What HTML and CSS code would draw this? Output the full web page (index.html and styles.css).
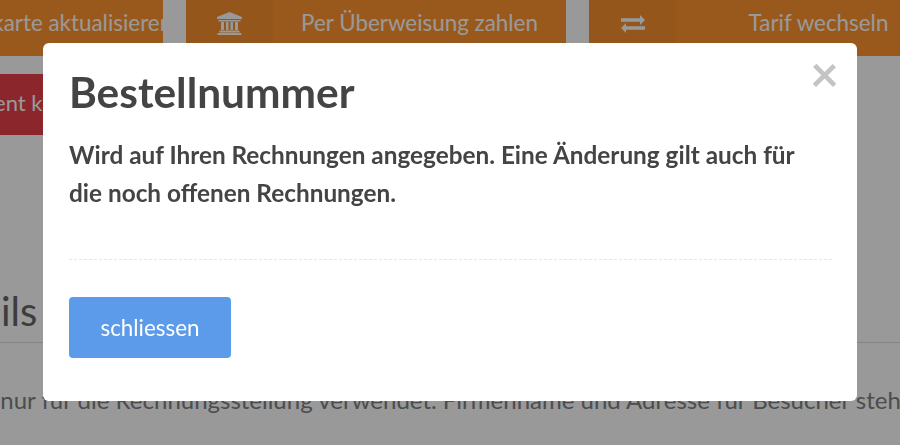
FILE: index.html
```html
<!DOCTYPE html>
<html lang="de">

<head>
  <meta charset="UTF-8" />
  <meta name="viewport" content="width=device-width, initial-scale=1.0" />
  <title>Bestellnummer</title>
  <link rel="stylesheet" href="styles.css">
</head>

<body>
  <div class="page">
    <div class="actions">
      <a class="action">
        <span class="action-icon"></span>
        <span class="action-text action-text-long">Kreditkarte aktualisieren</span>
      </a>
      <a class="action">
        <span class="action-icon">
          <svg width="25" height="23" viewBox="0 0 25 23">
            <path d="M12.5 0 L25 5 V7 H0 V5 Z M1.5 8 H23.5 V9.5 H1.5 Z M2.5 18.5 H22.5 V20.5 H2.5 Z M0.5 21 H24.5 V23 H0.5 Z" fill="currentColor" />
            <path d="M4 10 H7 V18 H4 Z M9 10 H11.5 V18 H9 Z M13.5 10 H16 V18 H13.5 Z M18 10 H21 V18 H18 Z" fill="currentColor" />
          </svg>
        </span>
        <span class="action-text">Per Überweisung zahlen</span>
      </a>
      <a class="action">
        <span class="action-icon">
          <svg width="24" height="18" viewBox="0 0 24 18">
            <path d="M0 3.2 H19 V0 L24 5 L19 10 V6.8 H0 Z M24 11.2 H5 V8 L0 13 L5 18 V14.8 H24 Z" fill="currentColor" />
          </svg>
        </span>
        <span class="action-text action-text-end">Tarif wechseln</span>
      </a>
    </div>

    <a class="btn-danger">Abonnement kündigen</a>

    <h2 class="section-title">Rechnungsdetails</h2>
    <p class="section-text">Diese Angaben werden nur für die Rechnungsstellung verwendet. Firmenname und Adresse für Besucher stehen</p>
  </div>

  <div class="overlay">
    <div class="modal">
      <span class="modal-close">&times;</span>
      <h1>Bestellnummer</h1>
      <p>Wird auf Ihren Rechnungen angegeben. Eine Änderung gilt auch für die noch offenen Rechnungen.</p>
      <div class="modal-sep"></div>
      <button class="btn-close">schliessen</button>
    </div>
  </div>
</body>

</html>
```

FILE: styles.css
```css
* {
  box-sizing: border-box;
}

html,
body {
  height: 100%;
}

body {
  margin: 0;
  overflow: hidden;
  background: #fff;
  font-family: "Lato", "Open Sans", sans-serif;
  color: #444;
}

.page {
  width: 900px;
  height: 445px;
  overflow: hidden;
}

/* Action buttons, cut off by the window on both sides */
.actions {
  display: flex;
  gap: 23px;
  margin: -5px 0 0 -217px;
  width: 1300px;
}

.action {
  flex: none;
  display: flex;
  width: 380px;
  height: 61px;
  background: #ff9530;
  color: #fff;
  font-size: 22.4px;
  overflow: hidden;
}

.action-icon {
  flex: none;
  display: flex;
  align-items: center;
  justify-content: center;
  width: 87px;
  padding-bottom: 4px;
  background: rgba(0, 0, 0, 0.03);
}

.action-text {
  flex: 1;
  line-height: 55px;
  text-align: center;
  white-space: nowrap;
}

.action-text-long {
  padding-left: 62px;
}

.action-text-end {
  padding-right: 8px;
}

.btn-danger {
  display: block;
  width: 300px;
  height: 61px;
  margin: 18px 0 0 -140px;
  background: #e8404c;
  color: #fff;
  font-size: 22px;
  line-height: 58px;
  text-align: center;
}

.section-title {
  width: 1300px;
  margin: 154px 0 0 -268px;
  padding-bottom: 9px;
  border-bottom: 1px solid #ddd;
  font-size: 40px;
  font-weight: 400;
  line-height: 44px;
  color: #666;
}

.section-text {
  width: 1200px;
  margin: 41px 0 0 -249px;
  font-size: 24px;
  line-height: 32px;
  white-space: nowrap;
  color: #808080;
}

.overlay {
  position: fixed;
  inset: 0;
  background: rgba(0, 0, 0, 0.4);
}

.modal {
  position: relative;
  width: 814px;
  height: 358px;
  margin: 43px auto 0;
  padding: 21px 25px 0 26px;
  background: #fff;
  border-radius: 6px;
}

.modal h1 {
  margin: 0;
  font-size: 42.4px;
  font-weight: 700;
  line-height: 56px;
  color: #444;
}

.modal p {
  max-width: 740px;
  margin: 16px 0 0;
  font-size: 24.35px;
  font-weight: 700;
  line-height: 38px;
  color: #444;
}

.modal-close {
  position: absolute;
  top: 8px;
  right: 18px;
  font-size: 50px;
  font-weight: 700;
  line-height: 44px;
  color: #c4c4c4;
}

.modal-sep {
  margin-top: 47px;
  border-top: 1px dashed #e3e7ec;
}

.btn-close {
  display: block;
  width: 162px;
  height: 61px;
  margin-top: 37px;
  padding: 0;
  border: none;
  border-radius: 4px;
  background: #5c9bea;
  color: #fff;
  font-family: inherit;
  font-size: 22.4px;
}
```
